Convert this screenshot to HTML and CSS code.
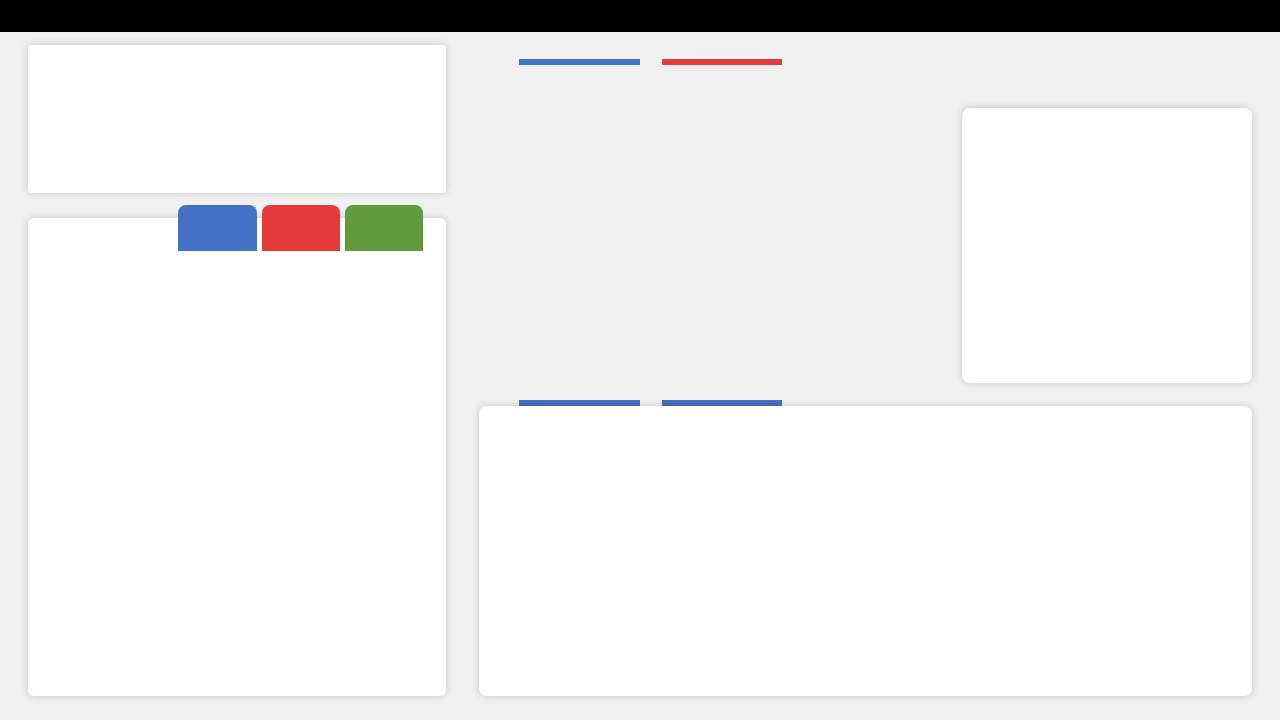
FILE: index.html
```html
<!DOCTYPE html>
<html lang="en">
<head>
<meta charset="utf-8">
<title>Dashboard</title>
<link rel="stylesheet" href="styles.css">
</head>
<body>
<header class="topbar"></header>
<main class="main">
  <section class="left-col">
    <div class="card card-small"></div>
    <div class="card card-tall">
      <div class="tabs">
        <div class="tab tab-blue"></div>
        <div class="tab tab-red"></div>
        <div class="tab tab-green"></div>
      </div>
    </div>
  </section>
  <section class="right-col">
    <div class="chart-area">
      <div class="legend">
        <span class="legend-bar bar-blue"></span>
        <span class="legend-bar bar-red narrow"></span>
      </div>
      <div class="side-row">
        <div class="card card-side"></div>
      </div>
    </div>
    <div class="legend legend-bottom">
      <span class="legend-bar bar-blue"></span>
      <span class="legend-bar bar-blue narrow"></span>
    </div>
    <div class="card card-wide"></div>
  </section>
</main>
</body>
</html>
```
FILE: styles.css
```css
* { box-sizing: border-box; }
html, body { margin: 0; padding: 0; }
body {
  background: #f1f1f1;
  font-family: "Liberation Sans", Arial, sans-serif;
  width: 1280px;
  height: 720px;
  overflow: hidden;
}
.topbar {
  height: 32px;
  background: #000;
}
.main {
  display: flex;
  gap: 33px;
  height: 688px;
  padding: 13px 28px 24px 28px;
}
.card {
  background: #fff;
  border-radius: 6px;
  box-shadow: 0 0 8px rgba(0, 0, 0, 0.18);
}
.left-col {
  width: 418px;
  display: flex;
  flex-direction: column;
  gap: 25px;
}
.card-small {
  height: 148px;
  border-radius: 4px;
}
.card-tall {
  flex: 1;
  position: relative;
}
.tabs {
  position: absolute;
  top: -13px;
  left: 150px;
  display: flex;
  gap: 5px;
}
.tab {
  width: 78px;
  height: 46px;
  border-radius: 8px 8px 0 0;
}
.tab-blue { background: #4472c4; width: 79px; }
.tab-red { background: #e63b3b; }
.tab-green { background: #629a3e; }
.right-col {
  flex: 1;
  display: flex;
  flex-direction: column;
}
.chart-area {
  height: 355px;
  display: flex;
  flex-direction: column;
}
.legend {
  display: flex;
  gap: 22px;
  padding-left: 40px;
  margin-top: 14px;
}
.legend-bar {
  display: block;
  width: 121px;
  height: 6px;
}
.legend-bar.narrow { width: 120px; }
.bar-blue { background: #4472c4; }
.bar-red { background: #e63b3b; }
.side-row {
  display: flex;
  justify-content: flex-end;
  margin-top: 43px;
}
.card-side {
  width: 290px;
  height: 275px;
  border-radius: 8px;
}
.legend-bottom {
  margin-top: 0;
}
.card-wide {
  flex: 1;
  border-radius: 8px;
}
```
